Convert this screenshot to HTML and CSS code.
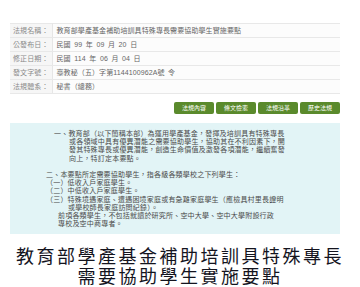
FILE: index.html
```html
<!DOCTYPE html>
<html lang="zh-Hant">
<head>
<meta charset="utf-8">
<title>教育部學產基金補助培訓具特殊專長需要協助學生實施要點</title>
<link rel="stylesheet" href="styles.css">
</head>
<body>
<div class="page">
  <table class="meta">
    <tr><th>法規名稱：</th><td>教育部學產基金補助培訓具特殊專長需要協助學生實施要點</td></tr>
    <tr><th>公發布日：</th><td>民國 99 年 09 月 20 日</td></tr>
    <tr><th>修正日期：</th><td>民國 114 年 06 月 04 日</td></tr>
    <tr><th>發文字號：</th><td>臺教秘（五）字第1144100962A號 令</td></tr>
    <tr><th>法規體系：</th><td>秘書（總務）</td></tr>
  </table>
  <div class="btns">
    <span class="btn">法規內容</span>
    <span class="btn">條文檢索</span>
    <span class="btn">法規沿革</span>
    <span class="btn">歷史法規</span>
  </div>
  <div class="box">
    <div class="item first">
      <div class="ln">一、教育部（以下簡稱本部）為運用學產基金，發揮及培訓具有特殊專長</div>
      <div class="ln cont">或各領域中具有優異潛能之需要協助學生，協助其在不利因素下，開</div>
      <div class="ln cont">發其特殊專長或優異潛能，創造生命價值及激發各項潛能，繼續奮發</div>
      <div class="ln cont">向上，特訂定本要點。</div>
    </div>
    <div class="item second">
      <div class="ln">二、本要點所定需要協助學生，指各級各類學校之下列學生：</div>
      <div class="ln">（一）低收入戶家庭學生。</div>
      <div class="ln">（二）中低收入戶家庭學生。</div>
      <div class="ln">（三）特殊境遇家庭、遭遇困境家庭或有急難家庭學生（應檢具村里長證明</div>
      <div class="ln sub">或學校師長家庭訪問紀錄）。</div>
      <div class="ln note">前項各類學生，不包括就讀於研究所、空中大學、空中大學附設行政</div>
      <div class="ln note">專校及空中商專者。</div>
    </div>
  </div>
  <h1 class="title">教育部學產基金補助培訓具特殊專長<br>需要協助學生實施要點</h1>
</div>
</body>
</html>
```
FILE: styles.css
```css
html, body {
  margin: 0;
  padding: 0;
  background: #ffffff;
}
body {
  width: 360px;
  height: 287px;
  overflow: hidden;
  font-family: "Liberation Sans", "Noto Sans CJK TC", sans-serif;
}
.page {
  padding: 23px 20px 0 10px;
}
.meta {
  width: 330px;
  border-collapse: collapse;
  font-size: 7px;
  letter-spacing: 0.1px;
}
.meta th,
.meta td {
  height: 13px;
  padding: 0;
  border-top: 1px solid #e8e8e8;
  border-bottom: 1px solid #e8e8e8;
  line-height: 13px;
  white-space: nowrap;
  font-weight: 400;
  text-align: left;
}
.meta th {
  width: 42px;
  padding-left: 3px;
  box-sizing: border-box;
  color: #8a8a8a;
  background: #f6f6f6;
  border-right: 1px solid #e6e6e6;
}
.meta td {
  padding-left: 4px;
  color: #666666;
  background: #fcfcfc;
  word-spacing: 1.5px;
}
.btns {
  display: flex;
  justify-content: flex-end;
  gap: 2px;
  margin-top: 8px;
}
.btn {
  width: 40px;
  height: 12px;
  line-height: 12px;
  text-align: center;
  font-size: 6px;
  color: #ffffff;
  background: #5a8a2c;
  border-radius: 2px;
}
.box {
  margin-top: 9px;
  height: 111px;
  box-sizing: border-box;
  padding: 7px 0 0 36px;
  background: #e2f4f6;
  color: #4a4a4a;
  font-size: 7px;
  letter-spacing: 0.2px;
  line-height: 8.2px;
}
.ln {
  white-space: nowrap;
}
.first {
  padding-left: 8px;
}
.first .cont {
  padding-left: 15px;
}
.second {
  margin-top: 8.2px;
}
.sub {
  padding-left: 22px;
}
.note {
  padding-left: 12px;
}
.title {
  margin: 13px 0 0 -10px;
  width: 360px;
  text-align: center;
  font-family: "Liberation Serif", "Noto Sans CJK TC", serif;
  font-weight: 400;
  font-size: 18px;
  line-height: 20px;
  letter-spacing: 2.5px;
  color: #14141e;
}
```
